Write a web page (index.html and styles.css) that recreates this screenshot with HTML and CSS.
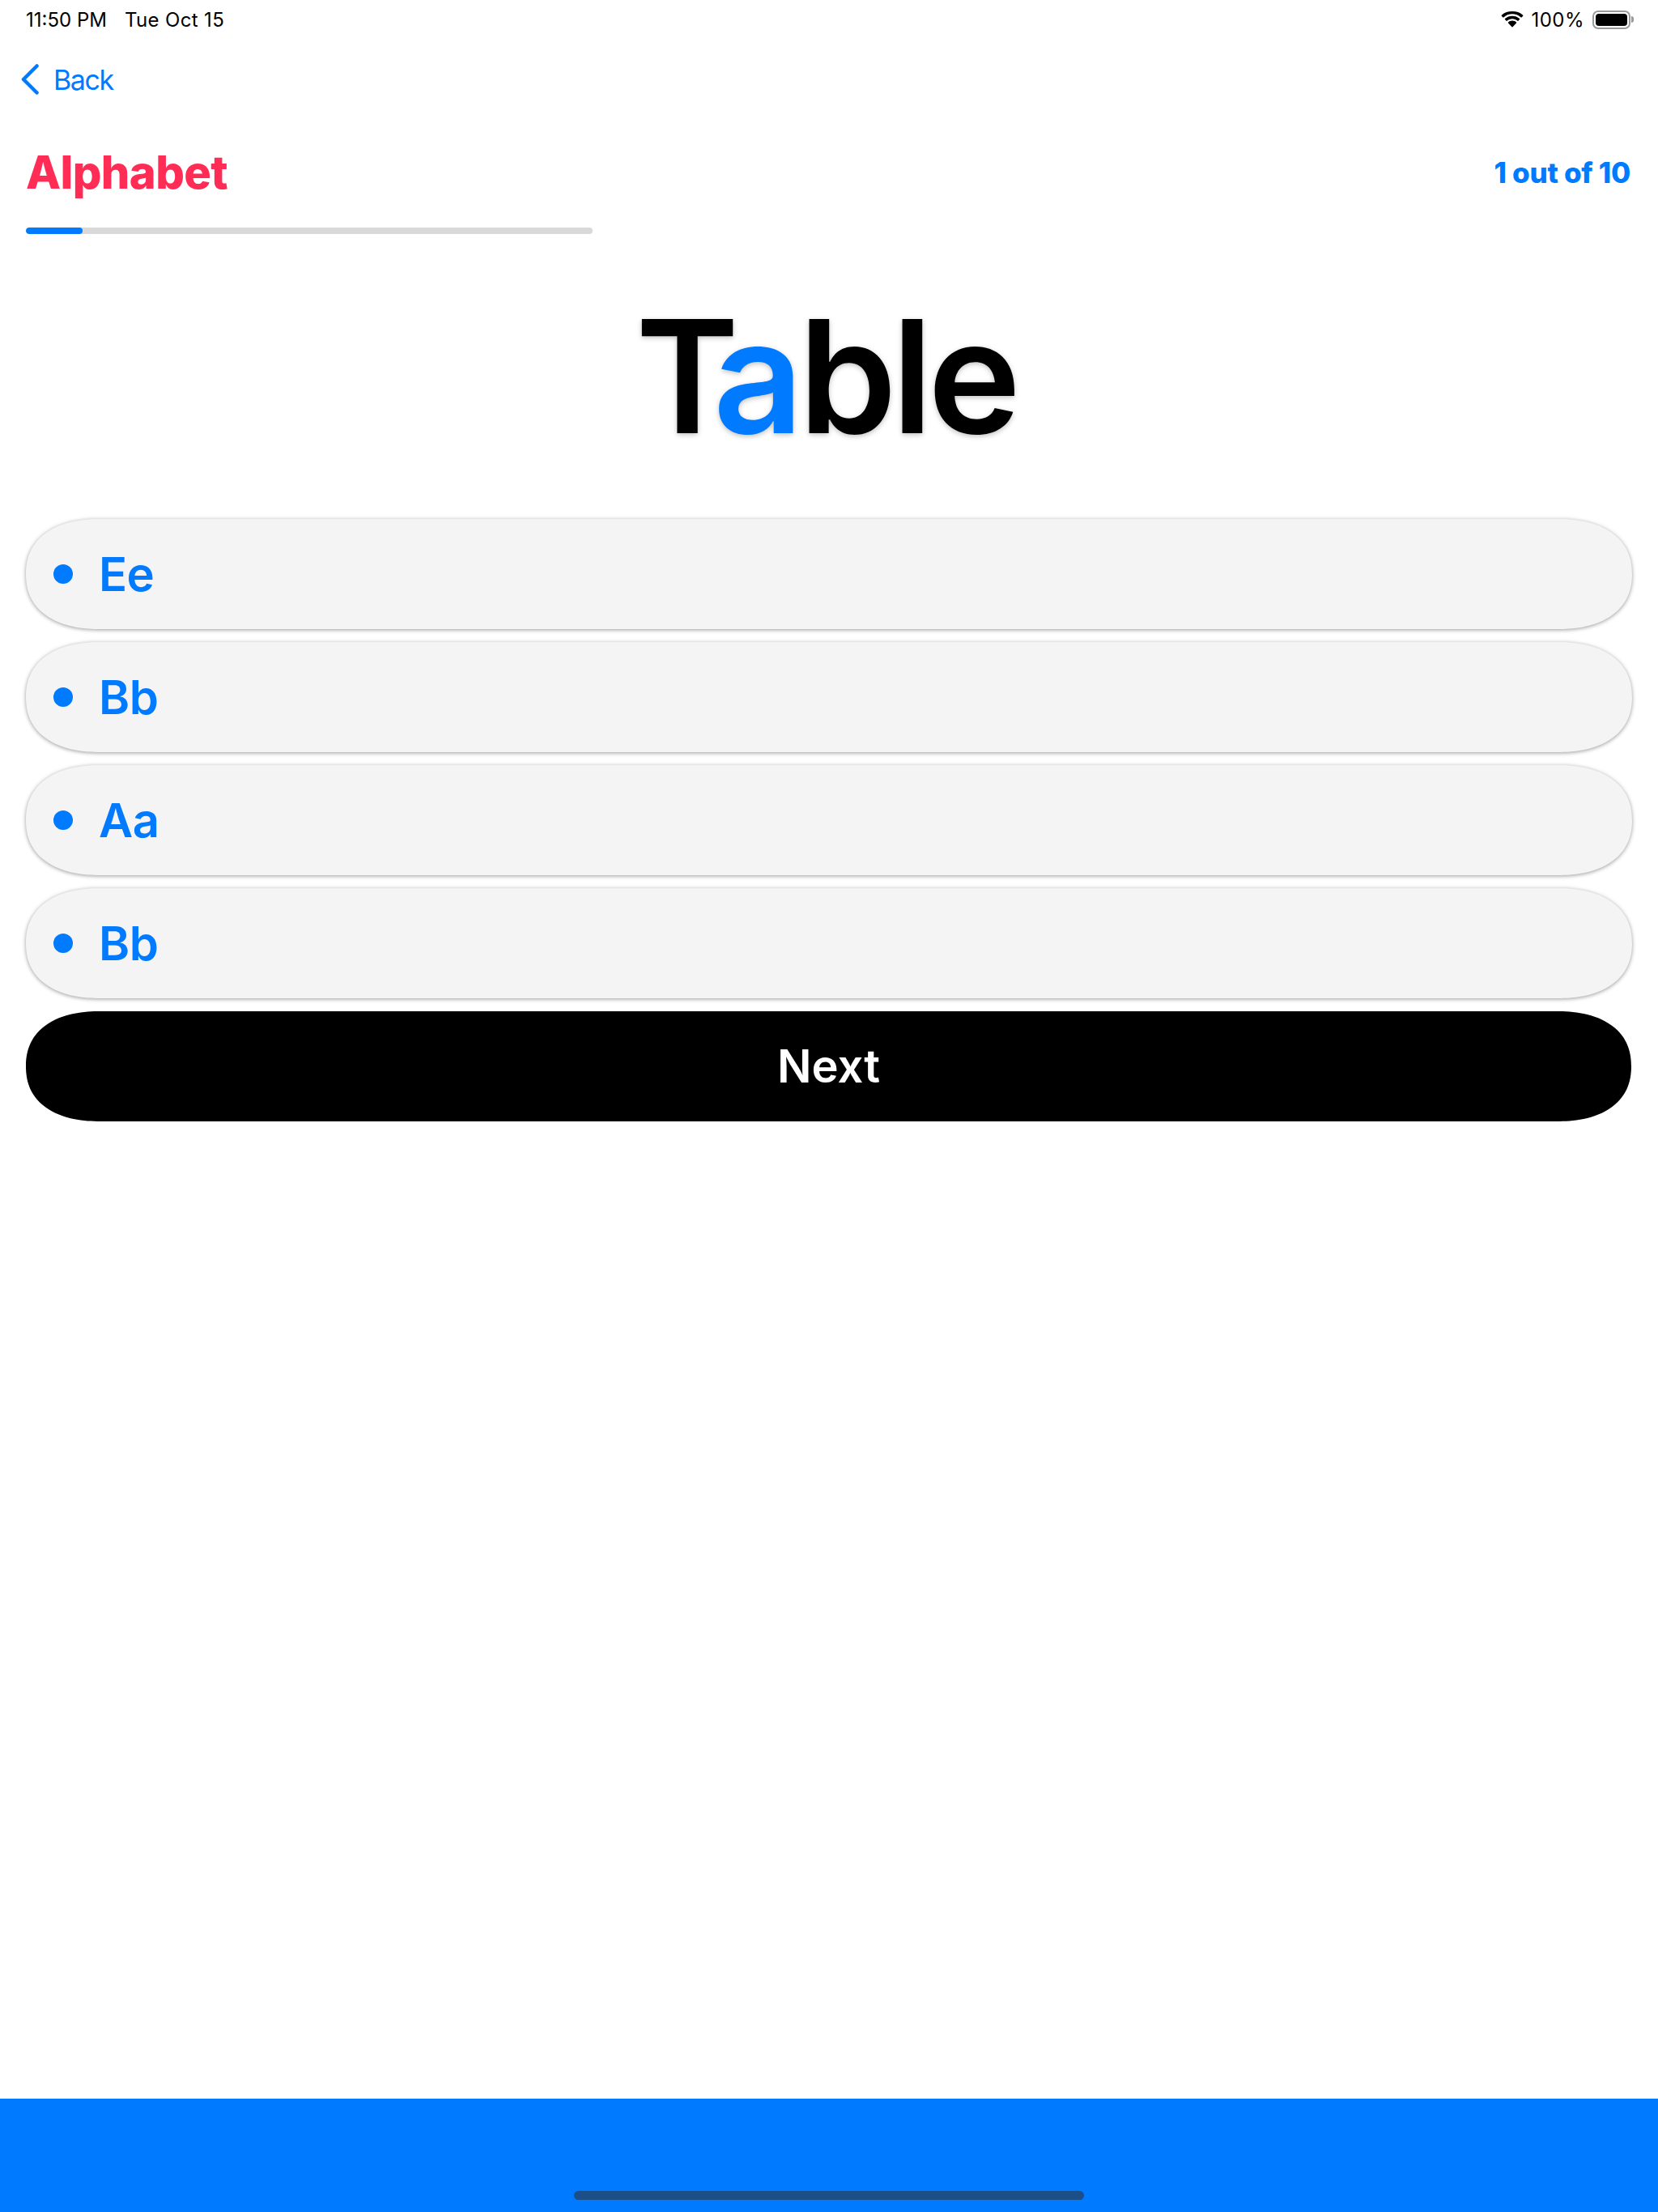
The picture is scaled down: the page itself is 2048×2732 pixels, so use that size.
FILE: index.html
```html
<!DOCTYPE html>
<html lang="en">
<head>
<meta charset="utf-8">
<title>Alphabet</title>
<link rel="stylesheet" href="styles.css">
</head>
<body>
<div class="page">
  <div class="status">
    <div class="status-left"><span>11:50 PM</span><span class="date">Tue Oct 15</span></div>
    <div class="status-right">
      <svg class="wifi" viewBox="0 0 28 20" aria-hidden="true">
        <path d="M14 3.2c4.1 0 7.9 1.6 10.7 4.2.3.2.7.2.9 0l1.6-1.7c.3-.3.3-.7 0-1C23.700 1.400 19 0 14 0S4.300 1.400.8 4.700c-.3.3-.3.7 0 1l1.600 1.700c.2.2.6.2.9 0C6.100 4.800 9.900 3.200 14 3.200z"/>
        <path d="M14 9.300c2.500 0 4.800.9 6.500 2.500.3.2.7.2.9 0l1.600-1.700c.3-.3.3-.7 0-1C20.600 6.900 17.400 5.700 14 5.700S7.400 6.900 5 9.100c-.3.3-.3.7 0 1l1.600 1.700c.2.2.6.2.9 0 1.700-1.600 4-2.500 6.500-2.500z"/>
        <path d="M14 11.500c-1.900 0-3.700.7-5 1.900-.3.3-.3.7 0 1l4.500 4.900c.3.3.7.3 1 0l4.500-4.900c.3-.3.3-.7 0-1-1.300-1.200-3.100-1.900-5-1.900z"/>
      </svg>
      <span class="pct">100%</span>
      <div class="battery"><div class="battery-shell"><div class="battery-fill"></div></div><div class="battery-nub"></div></div>
    </div>
  </div>
  <a class="back">
    <svg class="chevron" viewBox="0 0 22 38" aria-hidden="true"><path d="M19.500 2.500 3 19l16.500 16.500"/></svg>
    <span>Back</span>
  </a>
  <div class="head">
    <h1 class="title">Alphabet</h1>
    <div class="count">1 out of 10</div>
  </div>
  <div class="track"><div class="track-fill"></div></div>
  <div class="word"><span class="cap">T</span><span class="hit">a</span>ble</div>
  <div class="options">
    <div class="option"><i class="dot"></i><span>Ee</span></div>
    <div class="option"><i class="dot"></i><span>Bb</span></div>
    <div class="option"><i class="dot"></i><span>Aa</span></div>
    <div class="option"><i class="dot"></i><span>Bb</span></div>
    <div class="next">Next</div>
  </div>
  <div class="footer"><div class="home"></div></div>
</div>
</body>
</html>
```
FILE: styles.css
```css
* { box-sizing: border-box; }
html, body { margin: 0; padding: 0; background: #fff; }
body { font-family: Inter, "Liberation Sans", sans-serif; color: #000; }
.page { width: 2048px; height: 2732px; display: flex; flex-direction: column; overflow: hidden; }

.status { height: 48px; padding: 0 30px 0 32px; display: flex; justify-content: space-between; align-items: center; font-size: 24px; }
.status-left { display: flex; gap: 22px; }
.date { letter-spacing: .35px; }
.status-right { display: flex; align-items: center; gap: 9px; }
.pct { letter-spacing: .5px; }
.wifi { width: 28px; height: 20px; fill: #000; }
.battery { display: flex; align-items: center; margin-left: 1px; }
.battery-shell { width: 47px; height: 23px; border: 2px solid #9a9a9a; border-radius: 7px; padding: 2px; }
.battery-fill { width: 100%; height: 100%; background: #000; border-radius: 4px; }
.battery-nub { width: 3px; height: 8px; background: #9a9a9a; border-radius: 0 3px 3px 0; margin-left: 1px; }

.back { display: flex; align-items: center; gap: 18px; height: 40px; margin: 30px 0 0 26px; color: #007aff; font-size: 34px; letter-spacing: -1.4px; }
.chevron { width: 22px; height: 38px; fill: none; stroke: #007aff; stroke-width: 4.500; stroke-linecap: round; stroke-linejoin: round; }

.head { display: flex; justify-content: space-between; align-items: center; padding: 0 34px 0 32px; margin-top: 60px; height: 70px; }
.title { margin: 0; font-size: 56px; font-weight: 800; letter-spacing: -.6px; color: #ff2d55; line-height: 70px; }
.count { font-size: 35px; font-weight: 800; letter-spacing: -.25px; color: #007aff; }

.track { width: 700px; height: 8px; margin: 33px 0 0 32px; background: #d9d9d9; border-radius: 4px; overflow: hidden; }
.track-fill { width: 70px; height: 100%; background: #007aff; border-radius: 4px; }

.word { margin-top: 46px; padding-right: 8px; height: 260px; line-height: 260px; text-align: center; font-size: 194px; font-weight: 600; letter-spacing: -6px; text-shadow: 0 2px 6px rgba(0,0,0,.25); }
.cap { letter-spacing: -32px; }
.hit { color: #007aff; letter-spacing: -6px; }

.options { display: flex; flex-direction: column; gap: 16px; padding: 0 32px; margin-top: 46px; }
.option { height: 136px; display: flex; align-items: center; gap: 32px; padding-left: 34px; background: #f4f4f4; border-radius: 76px / 68px; box-shadow: 0 1px 5px rgba(0,0,0,.4); color: #007aff; font-size: 58px; font-weight: 600; letter-spacing: -.5px; }
.dot { width: 24px; height: 24px; border-radius: 50%; background: #007aff; }
.next { height: 136px; line-height: 136px; text-align: center; background: #000; color: #fff; border-radius: 76px / 68px; font-size: 56px; font-weight: 600; margin-right: 1px; }
@supports (corner-shape: superellipse(1.5)) {
  .option, .next { border-radius: 92px / 68px; corner-shape: superellipse(1.2); }
}

.footer { margin-top: auto; height: 140px; background: #007aff; display: flex; justify-content: center; align-items: flex-end; padding-bottom: 15px; }
.home { width: 630px; height: 11px; border-radius: 6px; background: #1c4f87; }
```
